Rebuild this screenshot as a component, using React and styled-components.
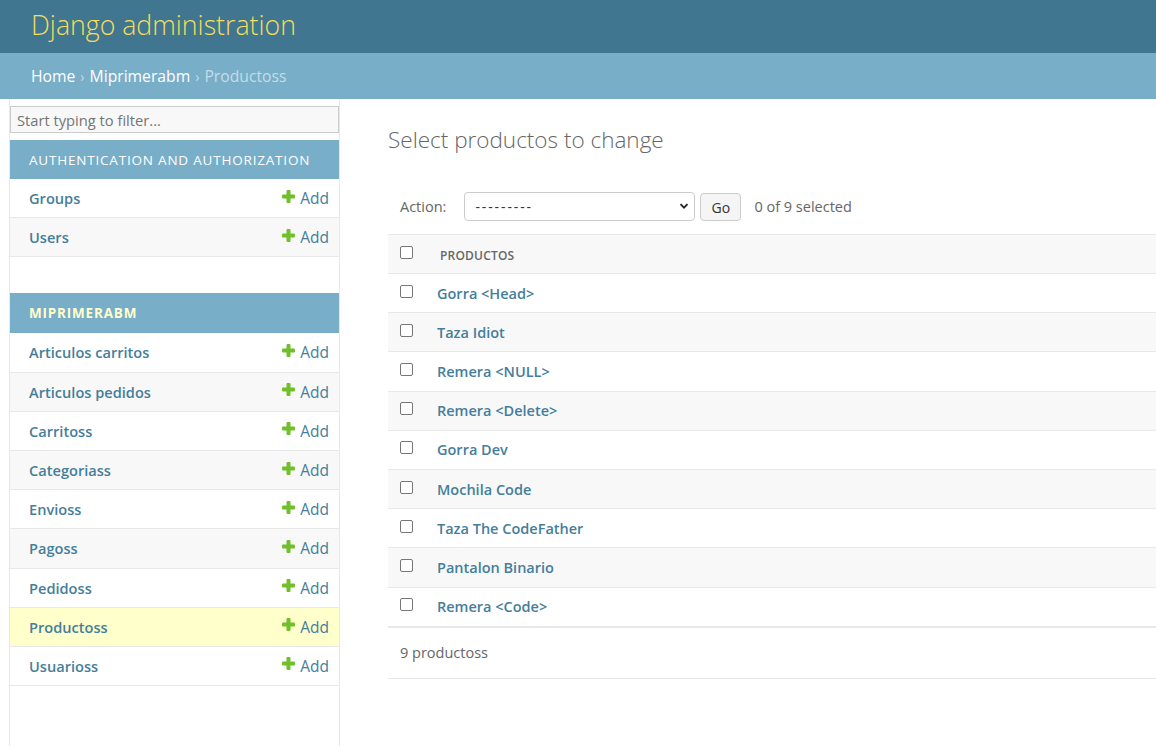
import React from 'react';
import styled, { createGlobalStyle } from 'styled-components';

const GlobalStyle = createGlobalStyle`
  html, body {
    margin: 0;
    padding: 0;
    background: #fff;
    font-family: "Open Sans", "Noto Sans", sans-serif;
    color: #333;
  }
  * { box-sizing: border-box; }
`;

const Page = styled.div`
  width: 1156px;
  height: 746px;
  overflow: hidden;
  display: flex;
  flex-direction: column;
`;

const Header = styled.header`
  height: 53px;
  background: #417690;
  display: flex;
  align-items: center;
  padding: 0 31px;
`;

const Branding = styled.h1`
  margin: -5px 0 0 0;
  font-size: 26.7px;
  font-weight: 300;
  color: #f5dd5d;
`;

const Breadcrumbs = styled.div`
  height: 46px;
  background: #79aec8;
  display: flex;
  align-items: center;
  padding: 0 31px 0;
  font-size: 15.7px;
  color: #c4dce8;
  gap: 5px;
`;

const Crumb = styled.a`
  color: #fff;
  text-decoration: none;
`;

const Sep = styled.span`
  color: #c4dce8;
  font-size: 14px;
`;

const Body = styled.div`
  flex: 1;
  display: flex;
`;

const Toggle = styled.div`
  width: 10px;
  border-right: 1px solid #e8e8e8;
`;

const Sidebar = styled.nav`
  width: 330px;
  border-right: 1px solid #e8e8e8;
  padding-top: 7px;
`;

const Filter = styled.input`
  display: block;
  width: 329px;
  height: 27px;
  margin: 0 0 7px 0;
  border: 1px solid #ccc;
  background: #f8f8f8;
  font-family: inherit;
  font-size: 14.7px;
  padding: 0 6px;
  color: #333;
  &::placeholder { color: #757575; }
`;

const Module = styled.div`
  margin-bottom: ${p => (p.$last ? '0' : '36px')};
`;

const Caption = styled.div`
  height: ${p => (p.$current ? '40px' : '39px')};
  background: #79aec8;
  color: ${p => (p.$current ? '#ffc' : '#fff')};
  font-weight: ${p => (p.$current ? 700 : 400)};
  font-size: 13.5px;
  letter-spacing: 0.8px;
  text-transform: uppercase;
  display: flex;
  align-items: center;
  padding: 0 19px;
`;

const Row = styled.div`
  height: 39.2px;
  display: flex;
  align-items: center;
  justify-content: space-between;
  padding: 0 10px 0 19px;
  border-bottom: 1px solid #e8e8e8;
  background: ${p => (p.$selected ? '#ffc' : p.$alt ? '#f8f8f8' : '#fff')};
`;

const ModelLink = styled.a`
  color: #447e9b;
  font-weight: 600;
  font-size: 14.6px;
  text-decoration: none;
`;

const AddLink = styled.a`
  display: flex;
  align-items: center;
  gap: 5px;
  color: #447e9b;
  font-size: 15.5px;
  text-decoration: none;
`;

const Main = styled.main`
  flex: 1;
  padding: 25px 0 0 48px;
  overflow: hidden;
`;

const Title = styled.h1`
  margin: 0 0 37px 0;
  font-size: 22.5px;
  font-weight: 300;
  color: #666;
`;

const Actions = styled.div`
  display: flex;
  align-items: center;
  padding: 0 0 14px 12px;
  height: 42px;
  font-size: 14.5px;
  color: #666;
`;

const Label = styled.span`
  margin-right: 18px;
`;

const Select = styled.div`
  width: 231px;
  height: 29px;
  border: 1px solid #ccc;
  border-radius: 4px;
  display: flex;
  align-items: center;
  justify-content: space-between;
  padding: 0 4px 0 10px;
  color: #333;
  font-size: 14px;
  letter-spacing: 1.9px;
  background: #fff;
`;

const GoButton = styled.button`
  height: 28px;
  width: 41px;
  margin-left: 5px;
  margin-top: 2px;
  border: 1px solid #ccc;
  border-radius: 4px;
  background: #f5f5f5;
  font-family: inherit;
  font-size: 14px;
  color: #333;
  padding: 0;
`;

const Counter = styled.span`
  margin-left: 13px;
  color: #666;
`;

const Table = styled.div`
  width: 800px;
`;

const TableRow = styled.div`
  height: ${p => (p.$head ? '39px' : '39.2px')};
  display: flex;
  align-items: center;
  padding-left: 12px;
  border-top: 1px solid #e8e8e8;
  background: ${p => (p.$alt || p.$head ? '#f8f8f8' : '#fff')};
`;

const Check = styled.span`
  width: 13px;
  height: 13px;
  border: 1px solid #767676;
  border-radius: 2px;
  background: #fff;
  flex-shrink: 0;
  margin-top: -4px;
`;

const ColHead = styled.span`
  margin-left: 27px;
  font-size: 12px;
  font-weight: 600;
  color: #666;
  letter-spacing: 0.2px;
  margin-top: 2px;
`;

const Product = styled.a`
  margin-left: 24px;
  color: #447e9b;
  font-weight: 600;
  font-size: 14.5px;
  text-decoration: none;
`;

const Paginator = styled.div`
  height: 53px;
  border-top: 2px solid #e8e8e8;
  border-bottom: 1px solid #e8e8e8;
  display: flex;
  align-items: center;
  padding: 0 0 0 12px;
  font-size: 14.5px;
  color: #666;
`;

const Plus = () => (
  <svg width="13" height="13" viewBox="0 0 13 13" style={{ marginTop: -4 }}>
    <rect x="4.5" y="0" width="4" height="13" rx="1" fill="#70bf2b" />
    <rect x="0" y="4.5" width="13" height="4" rx="1" fill="#70bf2b" />
  </svg>
);

const Chevron = () => (
  <svg width="12" height="12" viewBox="0 0 12 12">
    <path d="M2.5 4.2 L6 7.7 L9.5 4.2" stroke="#222" strokeWidth="1.8" fill="none" />
  </svg>
);

const authModels = ['Groups', 'Users'];
const appModels = [
  'Articulos carritos',
  'Articulos pedidos',
  'Carritoss',
  'Categoriass',
  'Envioss',
  'Pagoss',
  'Pedidoss',
  'Productoss',
  'Usuarioss',
];
const products = [
  'Gorra <Head>',
  'Taza Idiot',
  'Remera <NULL>',
  'Remera <Delete>',
  'Gorra Dev',
  'Mochila Code',
  'Taza The CodeFather',
  'Pantalon Binario',
  'Remera <Code>',
];

const ModelRow = ({ name, alt, selected }) => (
  <Row $alt={alt} $selected={selected}>
    <ModelLink href="#">{name}</ModelLink>
    <AddLink href="#">
      <Plus />
      Add
    </AddLink>
  </Row>
);

export default function App() {
  return (
    <Page>
      <GlobalStyle />
      <Header>
        <Branding>Django administration</Branding>
      </Header>
      <Breadcrumbs>
        <Crumb href="#">Home</Crumb>
        <Sep>›</Sep>
        <Crumb href="#">Miprimerabm</Crumb>
        <Sep>›</Sep>
        <span>Productoss</span>
      </Breadcrumbs>
      <Body>
        <Toggle />
        <Sidebar>
          <Filter placeholder="Start typing to filter..." />
          <Module>
            <Caption>Authentication and Authorization</Caption>
            {authModels.map((m, i) => (
              <ModelRow key={m} name={m} alt={i % 2 === 1} />
            ))}
          </Module>
          <Module $last>
            <Caption $current>Miprimerabm</Caption>
            {appModels.map((m, i) => (
              <ModelRow key={m} name={m} alt={i % 2 === 1} selected={m === 'Productoss'} />
            ))}
          </Module>
        </Sidebar>
        <Main>
          <Title>Select productos to change</Title>
          <Actions>
            <Label>Action:</Label>
            <Select>
              <span>---------</span>
              <Chevron />
            </Select>
            <GoButton>Go</GoButton>
            <Counter>0 of 9 selected</Counter>
          </Actions>
          <Table>
            <TableRow $head>
              <Check />
              <ColHead>PRODUCTOS</ColHead>
            </TableRow>
            {products.map((p, i) => (
              <TableRow key={p} $alt={i % 2 === 1}>
                <Check />
                <Product href="#">{p}</Product>
              </TableRow>
            ))}
            <Paginator>9 productoss</Paginator>
          </Table>
        </Main>
      </Body>
    </Page>
  );
}
